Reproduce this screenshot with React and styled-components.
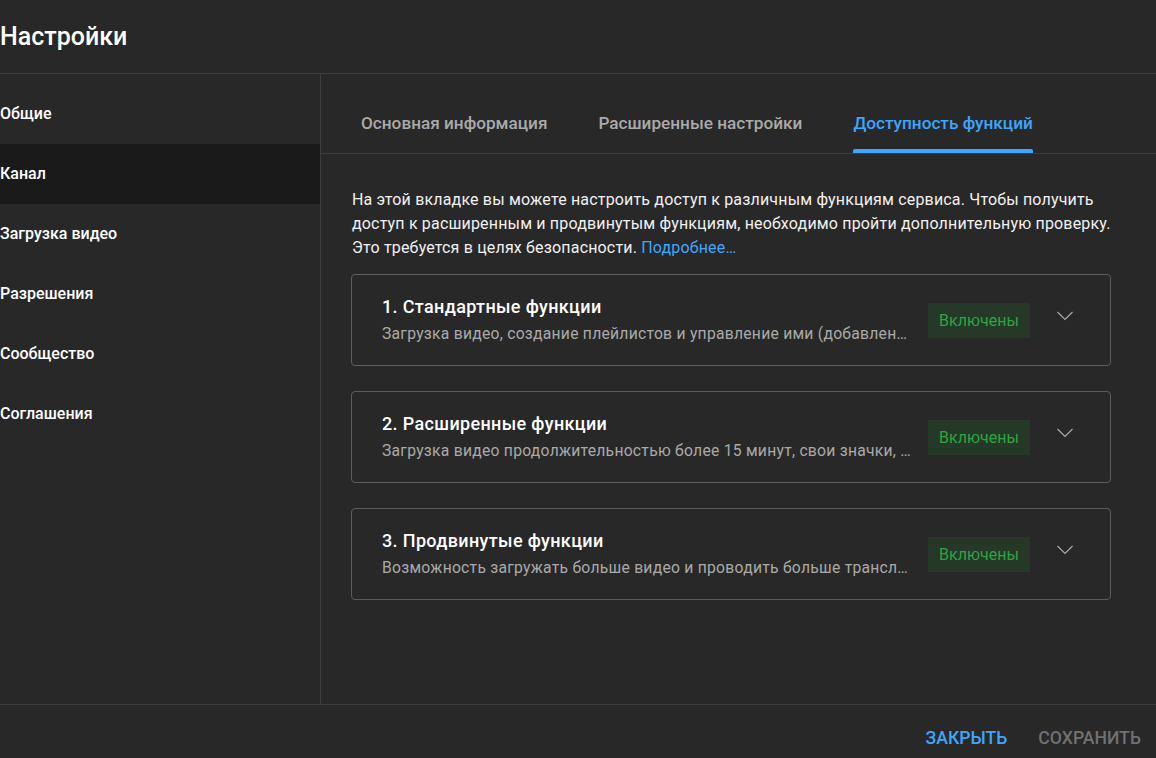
import React from 'react'
import styled, { createGlobalStyle } from 'styled-components'

const GlobalStyle = createGlobalStyle`
  html, body {
    margin: 0;
    padding: 0;
    background: #282828;
  }
  body {
    font-family: Roboto, "Noto Sans", Arial, sans-serif;
    color: #fff;
  }
`

const Dialog = styled.div`
  width: 1156px;
  height: 758px;
  background: #282828;
  display: flex;
  flex-direction: column;
  overflow: hidden;
`

const Header = styled.header`
  height: 73px;
  flex-shrink: 0;
  display: flex;
  align-items: center;
  border-bottom: 1px solid #3e3e3e;
`

const Title = styled.h1`
  margin: 0 0 1px;
  font-size: 25px;
  font-weight: 500;
  color: #fff;
`

const Body = styled.div`
  flex: 1;
  display: flex;
  min-height: 0;
`

const Sidebar = styled.nav`
  width: 320px;
  flex-shrink: 0;
  border-right: 1px solid #3e3e3e;
  padding-top: 10px;
`

const NavItem = styled.div`
  height: 60px;
  display: flex;
  align-items: center;
  font-size: 16px;
  font-weight: 500;
  color: #fff;
  padding-bottom: 2px;
  box-sizing: border-box;
  background: ${(p) => (p.$active ? '#1a1a1a' : 'transparent')};
`

const Main = styled.main`
  flex: 1;
  display: flex;
  flex-direction: column;
`

const Tabs = styled.div`
  height: 79px;
  display: flex;
  gap: 51px;
  padding-left: 40px;
  border-bottom: 1px solid #3e3e3e;
`

const Tab = styled.div`
  position: relative;
  display: flex;
  align-items: center;
  padding-top: 19px;
  font-size: 17.2px;
  font-weight: 500;
  color: ${(p) => (p.$active ? '#3ea6ff' : '#aaaaaa')};

  &::after {
    content: '';
    display: ${(p) => (p.$active ? 'block' : 'none')};
    position: absolute;
    left: 0;
    right: 0;
    bottom: 0;
    height: 4px;
    background: #3ea6ff;
    border-radius: 2px 2px 0 0;
  }
`

const Content = styled.div`
  padding: 34px 0 0 30px;
  width: 760px;
`

const Intro = styled.p`
  margin: 0 -20px 14px 1px;
  font-size: 16px;
  letter-spacing: 0.17px;
  line-height: 24px;
  color: #f1f1f1;
`

const MoreLink = styled.a`
  color: #3ea6ff;
  text-decoration: none;
`

const Cards = styled.div`
  display: flex;
  flex-direction: column;
  gap: 25px;
`

const Card = styled.div`
  height: 92px;
  box-sizing: border-box;
  border: 1px solid #5c5c5c;
  border-radius: 4px;
  display: flex;
  align-items: center;
  padding: 0 37px 0 30px;
`

const CardText = styled.div`
  flex: 1;
  min-width: 0;
  padding-bottom: 2px;
`

const CardTitle = styled.div`
  font-size: 18px;
  font-weight: 500;
  letter-spacing: 0.35px;
  color: #fff;
  line-height: 24px;
`

const CardDesc = styled.div`
  margin-top: 5px;
  font-size: 15.7px;
  letter-spacing: 0.25px;
  color: #aaaaaa;
  line-height: 20px;
  white-space: nowrap;
  overflow: hidden;
  text-overflow: ellipsis;
`

const Badge = styled.div`
  flex-shrink: 0;
  margin-left: 16px;
  width: 102px;
  height: 35px;
  display: flex;
  align-items: center;
  justify-content: center;
  background: #263827;
  color: #2ba640;
  font-size: 16px;
`

const Chevron = styled.div`
  flex-shrink: 0;
  margin-left: 27px;
  width: 16px;
  display: flex;
  align-items: center;
  justify-content: center;
  margin-top: -8px;
`

const Footer = styled.footer`
  height: 53px;
  flex-shrink: 0;
  border-top: 1px solid #3e3e3e;
  display: flex;
  align-items: center;
  justify-content: flex-end;
  gap: 31px;
  padding-right: 15px;
`

const FooterButton = styled.button`
  background: none;
  border: none;
  padding: 0;
  font-family: inherit;
  font-size: 17.6px;
  font-weight: 500;
  text-transform: uppercase;
  color: ${(p) => (p.$primary ? '#3ea6ff' : '#717171')};
  margin-top: 12px;
`

const navItems = ['Общие', 'Канал', 'Загрузка видео', 'Разрешения', 'Сообщество', 'Соглашения']

const features = [
  {
    title: '1. Стандартные функции',
    desc: 'Загрузка видео, создание плейлистов и управление ими (добавление видео, изменение порядка и т. д.)',
  },
  {
    title: '2. Расширенные функции',
    desc: 'Загрузка видео продолжительностью более 15 минут, свои значки, прямые трансляции и другие функции',
  },
  {
    title: '3. Продвинутые функции',
    desc: 'Возможность загружать больше видео и проводить больше трансляций в день',
  },
]

function ChevronIcon() {
  return (
    <svg width="16" height="10" viewBox="0 0 16 10">
      <path d="M0.5 1 L8 8.5 L15.5 1" fill="none" stroke="#aaaaaa" strokeWidth="1.2" />
    </svg>
  )
}

export default function App() {
  return (
    <Dialog>
      <GlobalStyle />
      <Header>
        <Title>Настройки</Title>
      </Header>
      <Body>
        <Sidebar>
          {navItems.map((item) => (
            <NavItem key={item} $active={item === 'Канал'}>
              {item}
            </NavItem>
          ))}
        </Sidebar>
        <Main>
          <Tabs>
            <Tab>Основная информация</Tab>
            <Tab>Расширенные настройки</Tab>
            <Tab $active>Доступность функций</Tab>
          </Tabs>
          <Content>
            <Intro>
              На этой вкладке вы можете настроить доступ к различным функциям сервиса. Чтобы получить
              доступ к расширенным и продвинутым функциям, необходимо пройти дополнительную проверку.
              Это требуется в целях безопасности. <MoreLink href="#">Подробнее…</MoreLink>
            </Intro>
            <Cards>
              {features.map((f) => (
                <Card key={f.title}>
                  <CardText>
                    <CardTitle>{f.title}</CardTitle>
                    <CardDesc>{f.desc}</CardDesc>
                  </CardText>
                  <Badge>Включены</Badge>
                  <Chevron>
                    <ChevronIcon />
                  </Chevron>
                </Card>
              ))}
            </Cards>
          </Content>
        </Main>
      </Body>
      <Footer>
        <FooterButton $primary>Закрыть</FooterButton>
        <FooterButton>Сохранить</FooterButton>
      </Footer>
    </Dialog>
  )
}
